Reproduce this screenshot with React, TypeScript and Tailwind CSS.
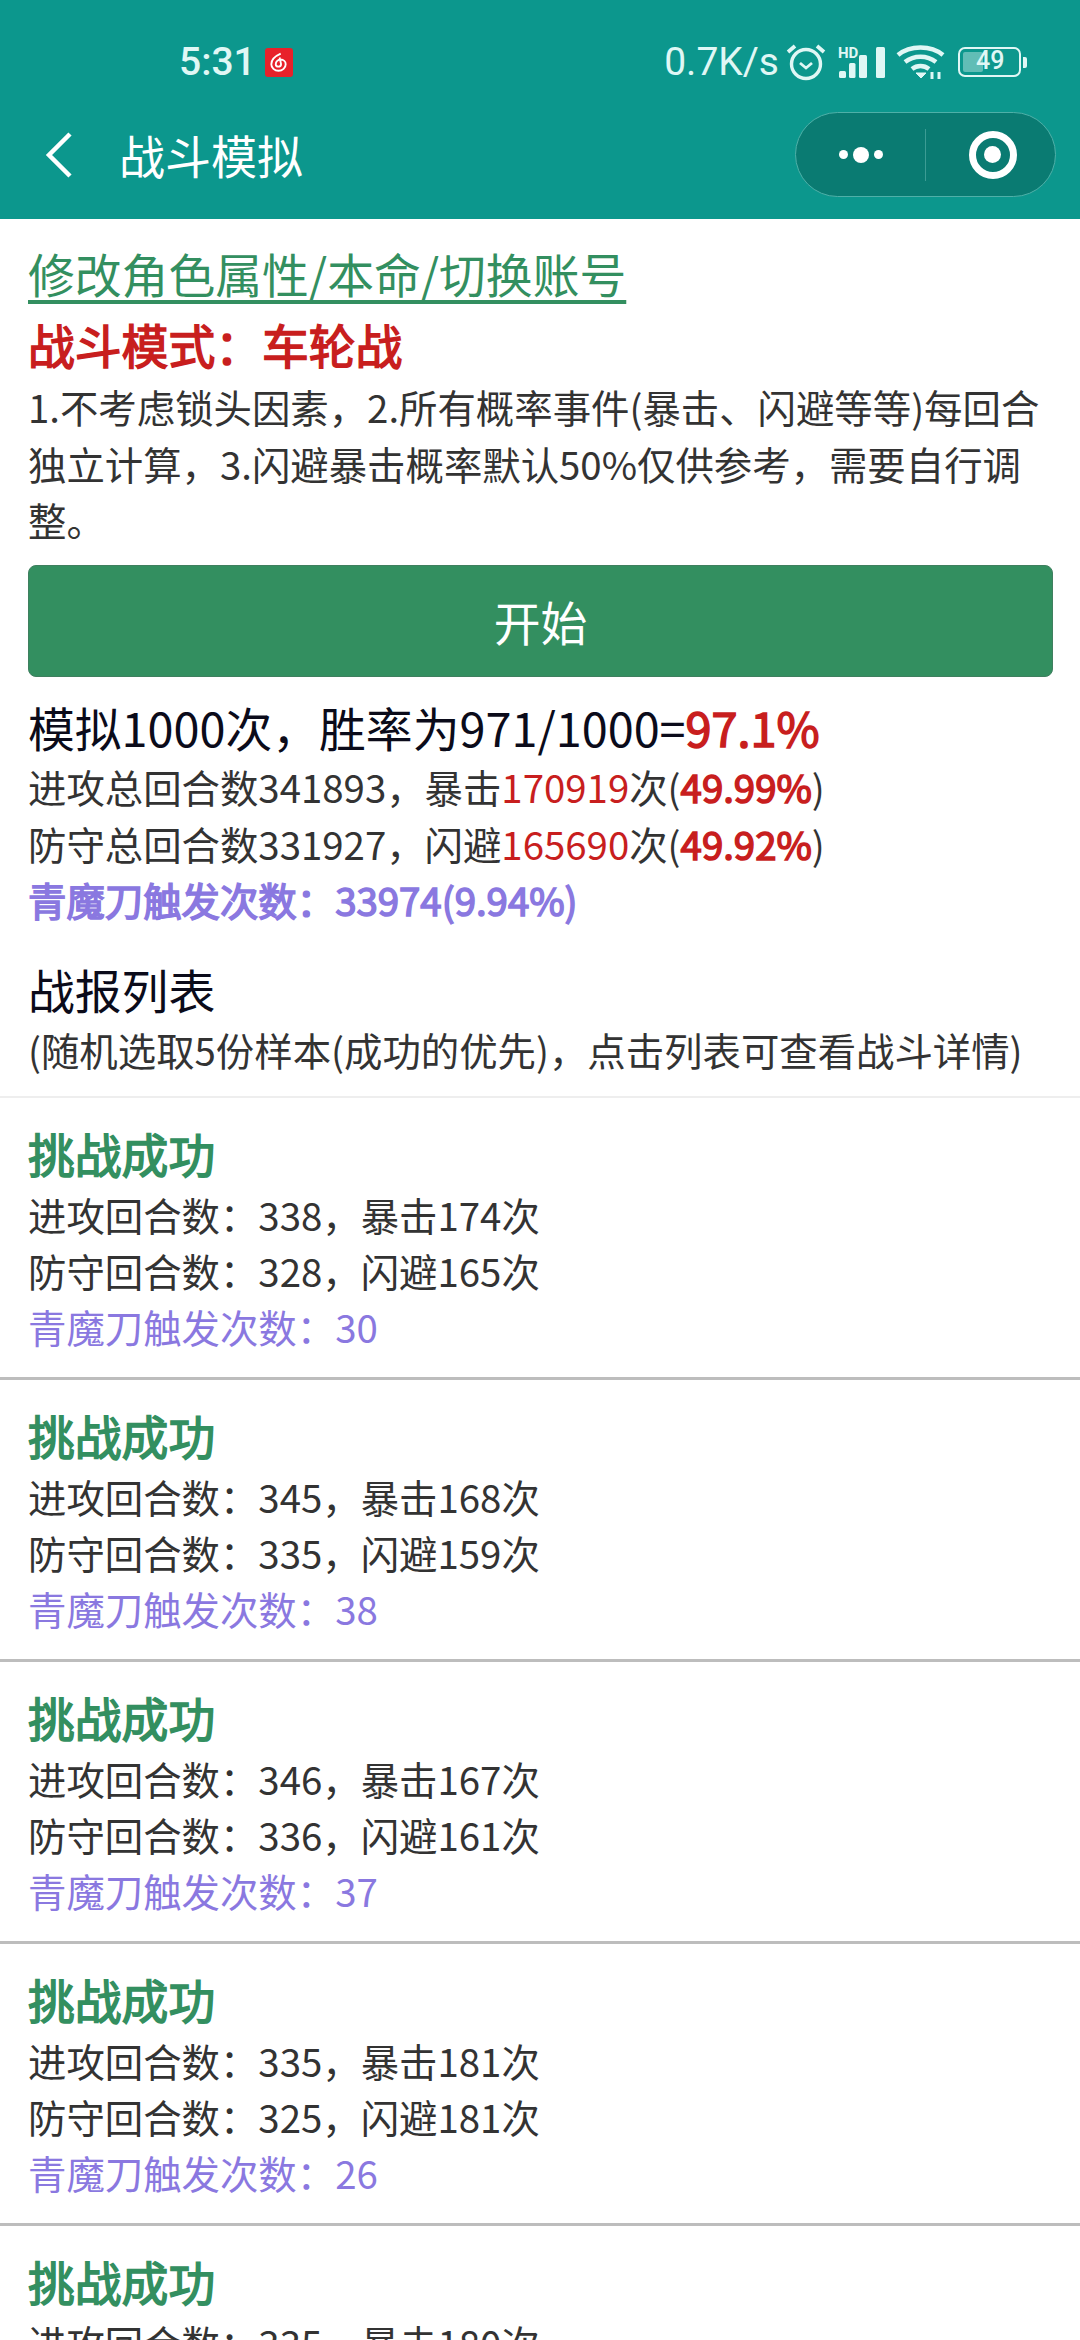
const cards = [
  { attack: '338', crit: '174', defend: '328', dodge: '165', proc: '30' },
  { attack: '345', crit: '168', defend: '335', dodge: '159', proc: '38' },
  { attack: '346', crit: '167', defend: '336', dodge: '161', proc: '37' },
  { attack: '335', crit: '181', defend: '325', dodge: '181', proc: '26' },
  { attack: '335', crit: '180', defend: '325', dodge: '170', proc: '30' },
]

const AppBadge = () => (
  <div className="ml-[9px] flex h-[29px] w-[28px] items-center justify-center rounded-[3px] bg-[#e8212a]">
    <svg width="21" height="21" viewBox="0 0 19 19" fill="none" stroke="#fff" strokeWidth="1.7">
      <path d="M11.5 1.5 C7 3.5 3 6.5 3 11 a6.5 6 0 0 0 13 0 a4.5 4.2 0 0 0 -9 0 a2.4 2.2 0 0 0 4.8 0 L10.5 5" />
    </svg>
  </div>
)

const StatusIcons = () => (
  <div className="ml-[6px] flex items-center">
    <svg width="42" height="38" viewBox="0 0 42 38" fill="none" stroke="#e0f7f5" strokeWidth="3.4">
      <circle cx="21" cy="21" r="14.5" />
      <path d="M15 20 l6 5 l6 -5" strokeWidth="2.8" />
      <path d="M3 9 L10 3 M39 9 L32 3" strokeWidth="3.8" />
    </svg>
    <svg className="ml-[9px]" width="52" height="34" viewBox="0 0 52 34" fill="#e0f7f5">
      <rect x="3" y="26" width="7" height="7" rx="1.5" />
      <rect x="13" y="18" width="6.5" height="15" rx="1.5" />
      <rect x="23" y="10" width="8" height="23" rx="1.5" />
      <rect x="40" y="2" width="9" height="31" rx="1.5" />
      <text x="2" y="13" fontSize="15" fontWeight="700" fontFamily="Roboto, sans-serif">HD</text>
    </svg>
    <svg className="ml-[8px]" width="50" height="36" viewBox="0 0 50 36" fill="none" stroke="#e0f7f5" strokeWidth="4.5">
      <path d="M2 11 C14 1 35 1 47 11" />
      <path d="M9 18 C18 11 31 11 40 18" />
      <path d="M16 25 C21 21 28 21 33 25" />
      <path d="M20 29 L25 34 L30 29 Z" fill="#e0f7f5" strokeWidth="1" />
      <path d="M36 35 V28 M43 35 V28" strokeWidth="3" />
    </svg>
    <div className="ml-[12px] flex items-center">
      <div className="flex h-[30px] w-[63px] items-center rounded-[7px] border-[2.5px] border-[#e0f7f5] p-[3px]">
        <div className="relative h-full w-[20px] rounded-[2px] bg-[#e0f7f5]/40">
          <span className="absolute left-[13px] top-[-6px] text-[25px] leading-[30px] font-medium text-[#e0f7f5] [font-family:Roboto,sans-serif]">49</span>
        </div>
      </div>
      <div className="ml-[2px] h-[11px] w-[4px] rounded-r-[2px] bg-[#e0f7f5]" />
    </div>
  </div>
)

const Capsule = () => (
  <div className="flex h-[85px] w-[261px] items-center rounded-full border border-[#4fb0a8] bg-[#0a7b72]">
    <div className="flex w-[129px] items-center justify-center gap-[5px]">
      <div className="h-[9px] w-[9px] rounded-full bg-white" />
      <div className="h-[16px] w-[16px] rounded-full bg-white" />
      <div className="h-[9px] w-[9px] rounded-full bg-white" />
    </div>
    <div className="h-[52px] w-px bg-[#3c9c94]" />
    <div className="flex flex-1 items-center justify-center pl-[4px]">
      <div className="flex h-[48px] w-[48px] items-center justify-center rounded-full border-[7px] border-white">
        <div className="h-[17px] w-[17px] rounded-full bg-white" />
      </div>
    </div>
  </div>
)

export default function App() {
  return (
    <div className="h-[2340px] w-[1080px] overflow-hidden bg-white text-[38.4px] leading-[56.5px] text-[#333333] [font-family:'Noto_Sans_CJK_SC','Noto_Sans',sans-serif]">
      <header className="h-[219px] bg-[#0c978d]">
        <div className="flex h-[112px] items-center pt-[12px] pl-[179px] pr-[53px] text-[#e0f7f5]">
          <span className="text-[39px] leading-none font-medium [font-family:Roboto,sans-serif]">5:31</span>
          <AppBadge />
          <span className="ml-auto text-[39px] leading-none [font-family:Roboto,sans-serif]">0.7K/s</span>
          <StatusIcons />
        </div>
        <div className="flex items-center pr-[24px] pl-[45px]">
          <svg width="28" height="46" viewBox="0 0 28 46" fill="none" stroke="#fff" strokeWidth="4.5">
            <path d="M25 2 L4 23 L25 44" />
          </svg>
          <span className="ml-[46px] text-[46px] leading-[85px] text-white">战斗模拟</span>
          <div className="ml-auto">
            <Capsule />
          </div>
        </div>
      </header>

      <section className="pt-[26px] pr-[27px] pl-[28px]">
        <div className="text-[46.8px] leading-[56px] text-[#338f60] underline decoration-[4px] underline-offset-[7px]">修改角色属性/本命/切换账号</div>
        <div className="mt-[15px] text-[46.8px] leading-[56px] text-[#c81e1e] [-webkit-text-stroke:1.5px_currentColor]">战斗模式：车轮战</div>
        <p className="mt-[6px]">1.不考虑锁头因素，2.所有概率事件(暴击、闪避等等)每回合独立计算，3.闪避暴击概率默认50%仅供参考，需要自行调整。</p>
        <button className="mt-[17.5px] h-[112px] w-full rounded-[8px] border border-[#3f7f5f] bg-[#338f60] text-[46.8px] text-white">开始</button>
        <div className="mt-[22px] text-[46.8px] leading-[56px] text-[#0b0b1a]">
          模拟1000次，胜率为971/1000=<span className="text-[#c81e1e] [-webkit-text-stroke:1.5px_currentColor]">97.1%</span>
        </div>
        <div className="mt-[3px]">
          进攻总回合数341893，暴击<span className="text-[#c81e1e]">170919</span>次(<span className="text-[#c81e1e] [-webkit-text-stroke:1.5px_currentColor]">49.99%</span>)
        </div>
        <div>
          防守总回合数331927，闪避<span className="text-[#c81e1e]">165690</span>次(<span className="text-[#c81e1e] [-webkit-text-stroke:1.5px_currentColor]">49.92%</span>)
        </div>
        <div className="text-[#8a78e0] [-webkit-text-stroke:1.5px_currentColor]">青魔刀触发次数：33974(9.94%)</div>
        <div className="mt-[33px] text-[46.8px] leading-[56px] text-[#0b0b1a]">战报列表</div>
        <div className="mt-[4.5px]">(随机选取5份样本(成功的优先)，点击列表可查看战斗详情)</div>
      </section>

      <div className="mt-[18.5px] border-t-2 border-[#eeeeee]">
        {cards.map((card) => (
          <div key={card.attack + card.crit} className="h-[282px] border-b-[3px] border-[#bdbdbd] pt-[27px] pl-[28px] leading-[56px]">
            <div className="mb-[5px] text-[46.8px] text-[#338f60] [-webkit-text-stroke:1.5px_currentColor]">挑战成功</div>
            <div>进攻回合数：{card.attack}，暴击{card.crit}次</div>
            <div>防守回合数：{card.defend}，闪避{card.dodge}次</div>
            <div className="text-[#8a78e0]">青魔刀触发次数：{card.proc}</div>
          </div>
        ))}
      </div>
    </div>
  )
}
